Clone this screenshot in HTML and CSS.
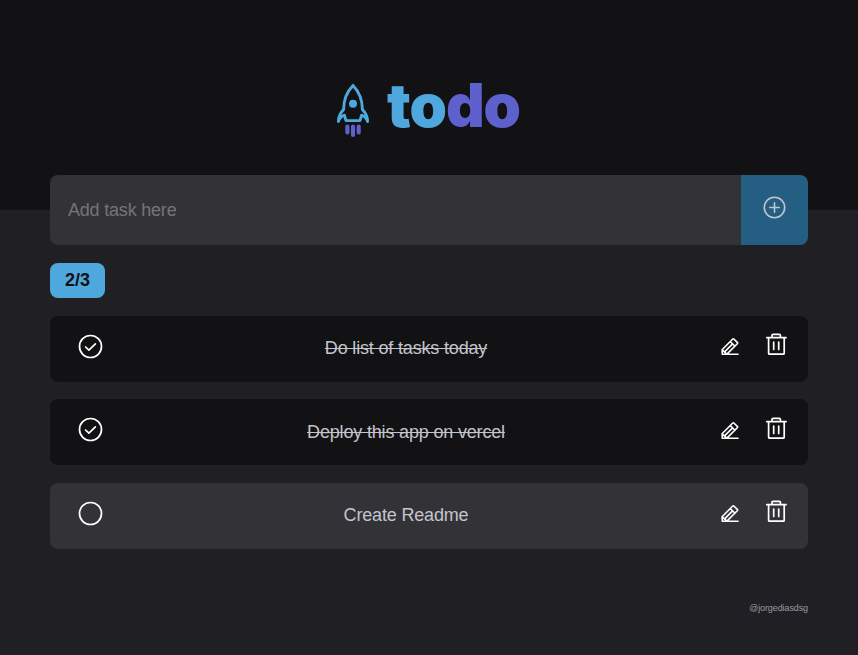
FILE: index.html
```
<!DOCTYPE html>
<html lang="en">
<head>
<meta charset="utf-8">
<title>todo</title>
<link rel="stylesheet" href="styles.css">
</head>
<body>
<svg class="defs" aria-hidden="true">
  <symbol id="pencil" viewBox="0 0 20 20"><path d="M3.3 18.3H19M3.3 18.3L3.1 13.8L13.5 3.2Q14.3 2.4 15.1 3.2L18.3 6.4Q19 7.1 18.3 7.8L7.9 18.1M11.2 5.5L16 10.3M3.1 13.8L7.9 18.1M5.6 15.9L13.6 7.9"/></symbol>
  <symbol id="trash" viewBox="0 0 22 24"><path d="M1.8 5.7H21M3.6 5.7V21.2Q3.6 22.2 4.6 22.2H18.2Q19.2 22.2 19.2 21.2V5.7M7 5.4V3.2Q7 2.3 8 2.3H14.4Q15.4 2.3 15.4 3.2V5.4M8.7 10V17.4M13.7 10V17.4"/></symbol>
  <symbol id="done" viewBox="0 0 26 26"><circle cx="13.5" cy="13.5" r="11"/><path d="M8.6 14L11.9 17.1L18.4 10.8"/></symbol>
  <symbol id="open" viewBox="0 0 26 26"><circle cx="13.5" cy="13.5" r="11"/></symbol>
</svg>
<header class="header">
  <svg class="rocket" viewBox="0 0 36 58">
    <path class="hull" d="M18 3.4C11.5 10 8.6 17.5 8.6 27.6C5 31 3.4 34 3.4 39.6C4.6 36.2 6.4 34.3 9.4 33.2L11 38.6H25L26.6 33.2C29.6 34.3 31.4 36.2 32.6 39.6C32.6 34 31 31 27.4 27.6C27.4 17.5 24.5 10 18 3.4Z"/>
    <circle class="window" cx="18" cy="21.7" r="4"/>
    <path class="flames" d="M12.4 44.6V50.4M18 44.6V53M23.7 44.6V50.4"/>
  </svg>
  <h1 class="brand">to<span>do</span></h1>
</header>
<main class="content">
  <form class="new-task">
    <input type="text" placeholder="Add task here">
    <button type="button" aria-label="Add"><svg viewBox="0 0 24 24"><circle cx="11.5" cy="11.5" r="10.2"/><path d="M6.8 11.5H16.2M11.5 6.8V16.2"/></svg></button>
  </form>
  <div class="counter">2/3</div>
  <ul class="tasks">
    <li class="task completed"><svg class="check"><use href="#done"/></svg><p>Do list of tasks today</p><svg class="edit"><use href="#pencil"/></svg><svg class="remove"><use href="#trash"/></svg></li>
    <li class="task completed"><svg class="check"><use href="#done"/></svg><p>Deploy this app on vercel</p><svg class="edit"><use href="#pencil"/></svg><svg class="remove"><use href="#trash"/></svg></li>
    <li class="task"><svg class="check"><use href="#open"/></svg><p>Create Readme</p><svg class="edit"><use href="#pencil"/></svg><svg class="remove"><use href="#trash"/></svg></li>
  </ul>
  <footer class="footer">@jorgediasdsg</footer>
</main>
</body>
</html>
```
FILE: styles.css
```
* { box-sizing: border-box; margin: 0; padding: 0; }
body { background: #201f24; color: #c4c4cc; font-family: "Liberation Sans", Arial, sans-serif; font-size: 18px; height: 655px; overflow: hidden; }
svg { fill: none; stroke-linecap: round; stroke-linejoin: round; flex: none; }
.defs { position: absolute; width: 0; height: 0; }
.header { background: #121214; height: 210px; padding: 82px 0 0 335px; display: flex; align-items: flex-start; }
.rocket { width: 36px; height: 58px; }
.hull { stroke: #4ea8de; stroke-width: 2.9; }
.window { fill: #4ea8de; }
.flames { stroke: #5e60ce; stroke-width: 4.1; }
.brand { font: 900 60px/60px Inter, sans-serif; color: #4ea8de; margin: -7px 0 0 16px; letter-spacing: -1px; }
.brand span { color: #5e60ce; }
.content { padding: 0 50px; margin-top: -35px; }
.new-task { display: flex; height: 70px; border-radius: 8px; overflow: hidden; position: relative; }
.new-task input { flex: 1; background: #333237; border: 0; padding: 0 18px; font: inherit; letter-spacing: -0.2px; color: #c4c4cc; }
.new-task input::placeholder { color: #757575; opacity: 1; }
.new-task button { width: 67px; border: 0; background: #245e82; padding: 0 0 4px; display: flex; align-items: center; justify-content: center; }
.new-task button svg { width: 24px; height: 24px; stroke: #c4c4cc; stroke-width: 1.6; }
.counter { width: 55px; height: 35px; margin-top: 18px; border-radius: 8px; background: #4ea8de; color: #121214; font-weight: bold; line-height: 35px; text-align: center; }
.tasks { list-style: none; margin-top: 18px; display: flex; flex-direction: column; gap: 17.4px; }
.task { height: 66px; border-radius: 8px; background: #333237; display: flex; align-items: flex-start; padding: 0 21px 0 27px; }
.task p { flex: 1; text-align: center; line-height: 20px; margin: 22.2px 0 0 -35px; padding-left: 25px; letter-spacing: -0.17px; }
.task svg { stroke: #fff; stroke-width: 1.7; }
.task .edit { stroke-width: 1.6; }
.completed { background: #121214; }
.completed p { text-decoration: line-through; }
.check { width: 26px; height: 26px; margin-top: 17px; }
.edit { width: 20px; height: 20px; margin: 20.2px 26px 0 0; }
.remove { width: 22px; height: 24px; margin-top: 16.2px; }
.footer { margin-top: 53px; text-align: right; font-size: 9px; line-height: 12px; letter-spacing: -0.1px; color: #9a9aa2; }
```
